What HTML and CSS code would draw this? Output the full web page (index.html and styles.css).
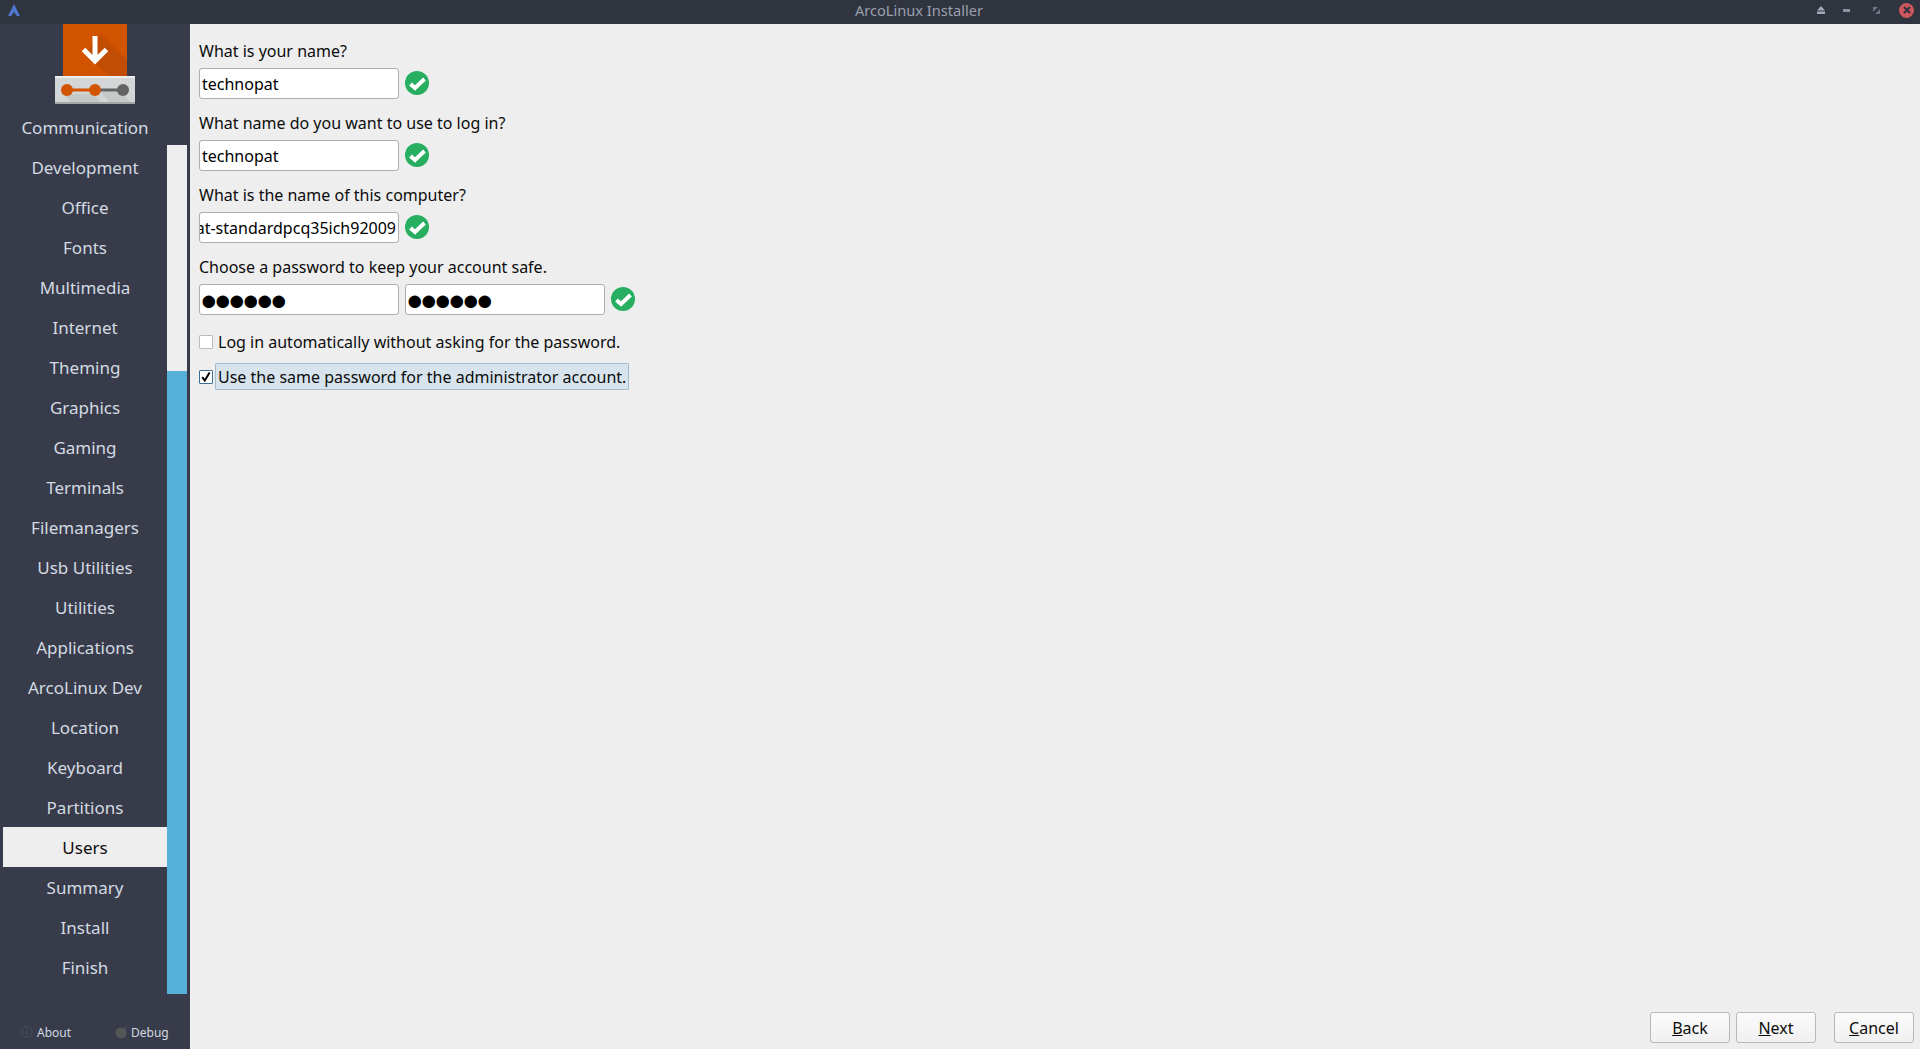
FILE: index.html
```html
<!DOCTYPE html>
<html lang="en">
<head>
<meta charset="utf-8">
<title>ArcoLinux Installer</title>
<link rel="stylesheet" href="styles.css">
</head>
<body>
<div class="window">
  <header class="titlebar">
    <svg class="arco" width="12" height="12" viewBox="0 0 12 12"><path d="M6 0 L12 12 H8.8 L6 8 L3.2 12 H0 Z" fill="#4f78cc"/></svg>
    <div class="title">ArcoLinux Installer</div>
    <div class="controls">
      <svg class="ctl" width="8" height="8" viewBox="0 0 8 8"><path d="M4 0 L8 4.5 H0 Z M0 5.5 H8 V8 H0 Z" fill="#a3a9b8"/></svg>
      <svg class="ctl ctl-min" width="7" height="3" viewBox="0 0 7 3"><rect width="7" height="3" fill="#8d93a3"/></svg>
      <svg class="ctl ctl-max" width="7" height="7" viewBox="0 0 7 7"><path d="M0 0 H5 L0 5 Z M7 7 H2 L7 2 Z" fill="#6f7584"/></svg>
      <div class="close"><svg width="8" height="8" viewBox="0 0 8 8"><path d="M1 1 L7 7 M7 1 L1 7" stroke="#2f343f" stroke-width="2"/></svg></div>
    </div>
  </header>
  <div class="content">
    <aside class="sidebar">
      <div class="logo">
        <svg width="80" height="80" viewBox="0 0 80 80">
          <rect x="8" y="0" width="64" height="52" fill="#d35400"/>
          <path d="M46 10 L72 36 V52 H54 L30 30 Z" fill="#c14d02"/>
          <path d="M40 12 V37 M28.5 25.5 L40 37 L51.5 25.5" fill="none" stroke="#fff" stroke-width="5"/>
          <rect x="0" y="52" width="80" height="28" fill="#d3d5d6"/>
          <rect x="0" y="52" width="80" height="2" fill="#eceeee"/>
          <rect x="0" y="78" width="80" height="2" fill="#9fa8a3"/>
          <path d="M8 70 H38 L46 78 H16 Z M46 68 H66 L76 78 H54 Z" fill="#c6c9ca"/>
          <rect x="12" y="64.5" width="28" height="3" fill="#d35400"/>
          <rect x="40" y="64.5" width="28" height="3" fill="#636363"/>
          <circle cx="12" cy="66" r="6" fill="#d35400"/>
          <circle cx="40" cy="66" r="6" fill="#d35400"/>
          <circle cx="68" cy="66" r="6" fill="#636363"/>
        </svg>
      </div>
      <div class="nav-wrap">
        <nav class="nav">
          <div class="nav-item">Communication</div>
          <div class="nav-item">Development</div>
          <div class="nav-item">Office</div>
          <div class="nav-item">Fonts</div>
          <div class="nav-item">Multimedia</div>
          <div class="nav-item">Internet</div>
          <div class="nav-item">Theming</div>
          <div class="nav-item">Graphics</div>
          <div class="nav-item">Gaming</div>
          <div class="nav-item">Terminals</div>
          <div class="nav-item">Filemanagers</div>
          <div class="nav-item">Usb Utilities</div>
          <div class="nav-item">Utilities</div>
          <div class="nav-item">Applications</div>
          <div class="nav-item">ArcoLinux Dev</div>
          <div class="nav-item">Location</div>
          <div class="nav-item">Keyboard</div>
          <div class="nav-item">Partitions</div>
          <div class="nav-item active">Users</div>
          <div class="nav-item">Summary</div>
          <div class="nav-item">Install</div>
          <div class="nav-item">Finish</div>
        </nav>
        <div class="progress"><div class="progress-fill"></div></div>
      </div>
      <div class="side-foot">
        <div class="foot-item foot-about">
          <svg width="12" height="12" viewBox="0 0 12 12"><circle cx="6" cy="6" r="5.2" fill="none" stroke="#4a4e5a" stroke-width="1"/><rect x="5.4" y="5" width="1.2" height="4" fill="#4a4e5a"/><rect x="5.4" y="3" width="1.2" height="1.2" fill="#4a4e5a"/></svg>
          <span>About</span>
        </div>
        <div class="foot-item foot-debug">
          <svg width="13" height="13" viewBox="0 0 13 13"><circle cx="6" cy="7" r="5.5" fill="#555"/><path d="M9 3 L12 1" stroke="#555" stroke-width="1"/></svg>
          <span>Debug</span>
        </div>
      </div>
    </aside>
    <main class="main">
      <form class="form">
        <label class="lbl">What is your name?</label>
        <div class="row">
          <div class="field">technopat</div>
          <svg class="check" width="24" height="24" viewBox="0 0 24 24"><use href="#ok"/></svg>
        </div>
        <label class="lbl">What name do you want to use to log in?</label>
        <div class="row">
          <div class="field">technopat</div>
          <svg class="check" width="24" height="24" viewBox="0 0 24 24"><use href="#ok"/></svg>
        </div>
        <label class="lbl">What is the name of this computer?</label>
        <div class="row">
          <div class="field field-clip"><span>technopat-standardpcq35ich92009</span></div>
          <svg class="check" width="24" height="24" viewBox="0 0 24 24"><use href="#ok"/></svg>
        </div>
        <label class="lbl">Choose a password to keep your account safe.</label>
        <div class="row">
          <div class="field field-pass">●●●●●●</div>
          <div class="field field-pass">●●●●●●</div>
          <svg class="check" width="24" height="24" viewBox="0 0 24 24"><use href="#ok"/></svg>
        </div>
        <div class="opt opt-first">
          <span class="box"></span>
          <span class="opt-text">Log in automatically without asking for the password.</span>
        </div>
        <div class="opt">
          <span class="box box-on"><svg width="12" height="12" viewBox="0 0 12 12"><path d="M2.2 6.2 L4.8 9.5 L9.6 1.6" fill="none" stroke="#000" stroke-width="2"/></svg></span>
          <span class="opt-text focus">Use the same password for the administrator account.</span>
        </div>
      </form>
      <footer class="buttons">
        <button class="btn" type="button"><u>B</u>ack</button>
        <button class="btn" type="button"><u>N</u>ext</button>
        <button class="btn btn-cancel" type="button"><u>C</u>ancel</button>
      </footer>
    </main>
  </div>
</div>
<svg class="defs" width="0" height="0"><defs><g id="ok"><circle cx="12" cy="12" r="12" fill="#27ae60"/><path d="M5.5 13 L10 17 L19.5 8" fill="none" stroke="#fff" stroke-width="4"/></g></defs></svg>
</body>
</html>
```
FILE: styles.css
```css
* { box-sizing: border-box; }
html, body { margin: 0; height: 100%; overflow: hidden; }
body { font-family: "Noto Sans", sans-serif; font-size: 16px; color: #0c0c0c; background: #eeeeee; }
.defs { position: absolute; }
.window { height: 1049px; display: flex; flex-direction: column; }
.titlebar { height: 24px; flex: none; background: #2f343f; display: flex; align-items: center; position: relative; padding: 0 6px 4px 8px; }
.title { position: absolute; left: 0; width: 1838px; text-align: center; color: #9aa0ae; font-size: 14.6px; line-height: 20px; top: 0; }
.controls { margin-left: auto; display: flex; align-items: center; }
.ctl { display: block; }
.ctl-min { margin-left: 18px; }
.ctl-max { margin-left: 23px; }
.close { margin-left: 19px; width: 15px; height: 15px; border-radius: 50%; background: #cc575d; display: flex; align-items: center; justify-content: center; }
.content { flex: 1; display: flex; min-height: 0; }
.sidebar { width: 190px; flex: none; background: #383c4a; display: flex; flex-direction: column; }
.logo { height: 83px; display: flex; justify-content: center; }
.nav-wrap { display: flex; padding-left: 3px; }
.nav { width: 164px; }
.nav-item { height: 40px; display: flex; align-items: center; justify-content: center; color: #d3dae3; font-size: 17px; padding-top: 1px; }
.nav-item.active { background: #eeeeee; color: #0c0c0c; }
.progress { width: 20px; height: 849px; margin-top: 38px; background: #eeeeee; display: flex; flex-direction: column; justify-content: flex-end; }
.progress-fill { height: 623px; background: #56b0d8; }
.side-foot { position: relative; flex: 1; font-size: 12px; color: #d3dae3; }
.foot-item { position: absolute; top: 28px; display: flex; align-items: center; gap: 4px; height: 20px; }
.foot-about { left: 21px; }
.foot-debug { left: 115px; gap: 3px; }
.main { flex: 1; display: flex; flex-direction: column; padding: 0 6px 6px 9px; }
.form { flex: 1; }
.lbl { display: block; height: 24px; margin-top: 12px; line-height: 24px; font-size: 16px; }
.form .lbl:first-child { margin-top: 15px; }
.row { display: flex; align-items: center; gap: 6px; height: 31px; margin-top: 5px; }
.field { width: 200px; height: 31px; border: 1px solid #adadad; border-radius: 3px; background: #fff; line-height: 31px; padding-left: 2px; font-size: 16px; white-space: nowrap; overflow: hidden; color: #000; }
.field-clip { padding: 0 2px 0 0; display: flex; justify-content: flex-end; }
.field-pass { font-size: 29px; line-height: 27px; letter-spacing: -3.5px; padding-left: 0; overflow: visible; }
.check { display: block; margin-top: -1px; flex: none; }
.opt { display: flex; align-items: center; height: 27px; margin-top: 9px; }
.opt-first { margin-top: 15px; height: 24px; }
.box { width: 14px; height: 14px; border: 1px solid #bcbcbc; background: #fff; border-radius: 1px; flex: none; display: flex; align-items: center; justify-content: center; margin-right: 2px; }
.box-on { border-color: #3d6f96; }
.opt-text { padding: 0 2px; line-height: 25px; white-space: nowrap; border: 1px solid transparent; }
.focus { background: #d7e4ee; border-color: #a5bccd; border-radius: 1px; height: 27px; line-height: 26px; }
.buttons { display: flex; justify-content: flex-end; gap: 6px; flex: none; }
.btn { width: 80px; height: 31px; border: 1px solid #b8b8b8; border-radius: 3px; background: linear-gradient(#fbfbfb, #f0f0f0); font: 16px "Noto Sans", sans-serif; color: #0c0c0c; padding: 0; }
.btn-cancel { margin-left: 12px; }
```
